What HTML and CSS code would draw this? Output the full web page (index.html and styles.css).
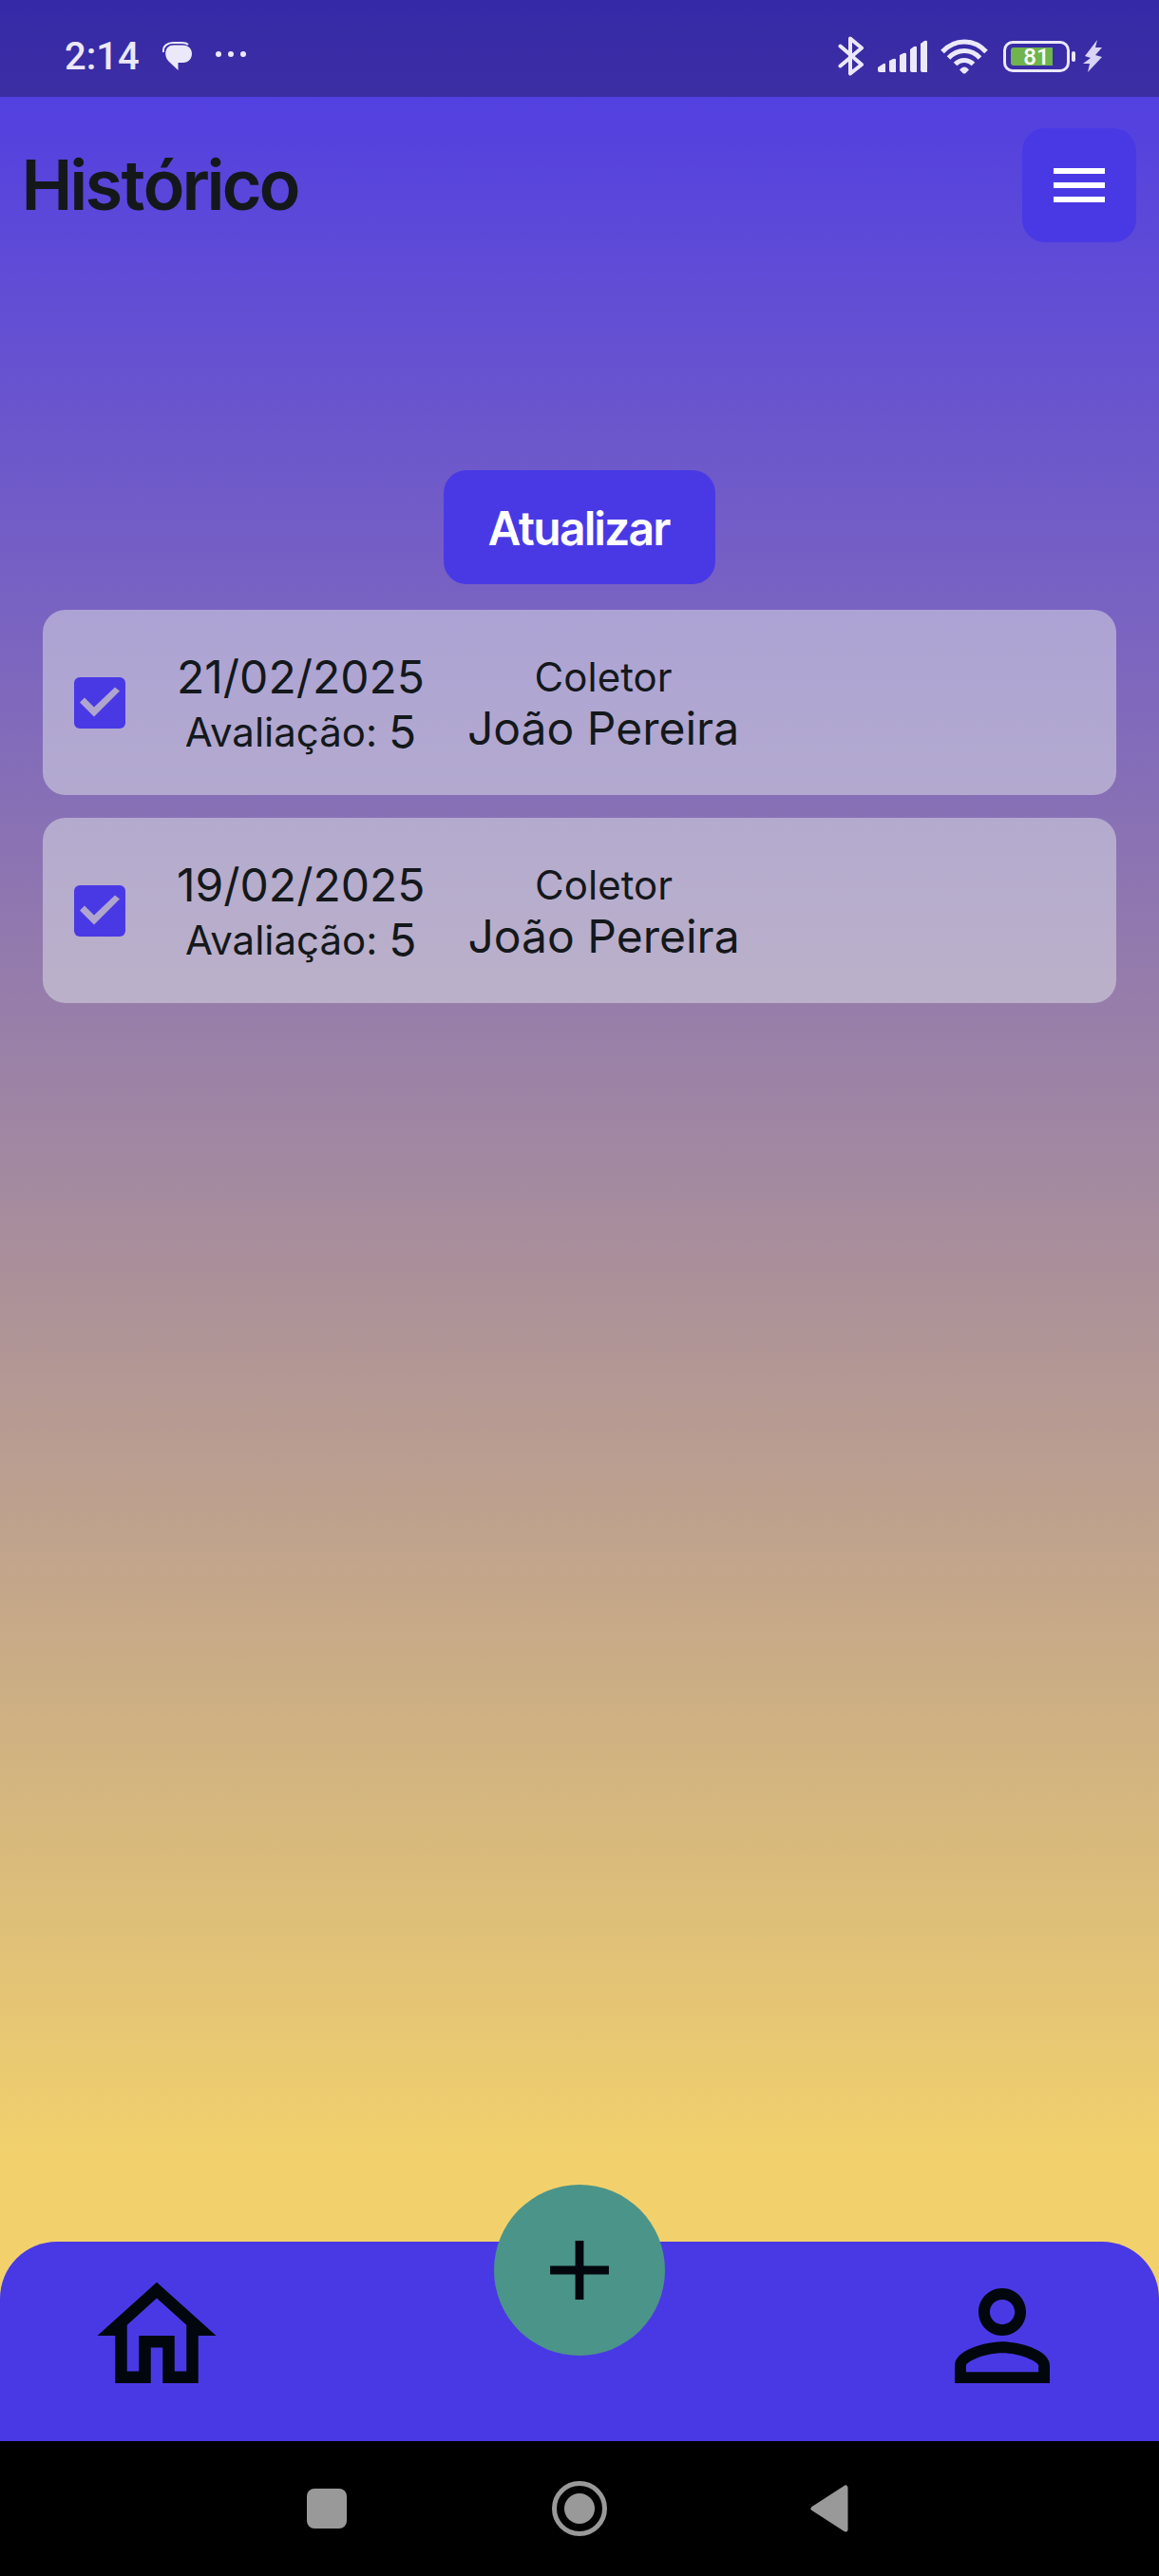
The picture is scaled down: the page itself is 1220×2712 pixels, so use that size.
FILE: index.html
```html
<!DOCTYPE html>
<html lang="pt-BR">
<head>
<meta charset="utf-8">
<meta name="viewport" content="width=device-width, initial-scale=1">
<title>Histórico</title>
<link rel="stylesheet" href="styles.css">
</head>
<body>
<div class="screen">
  <div class="status-bar">
    <div class="status-left">
      <span class="clock">2:14</span>
      <svg class="icon-chat" viewBox="0 0 32 30" width="32" height="30" aria-hidden="true">
        <path d="M1 11C0 4 6 1 11 1H21Q25 1 27 3" fill="none" stroke="#ebe8fa" stroke-width="2"/>
        <path d="M12 3.500H21C28 3.500 31 8 31 12.500C31 18 27 22 22 22H16.500V30L7 21C1 15 2 3.500 12 3.500Z" fill="#ebe8fa"/>
      </svg>
      <svg class="icon-dots" viewBox="0 0 32 6" width="32" height="6" aria-hidden="true">
        <g fill="#ebe8fa"><circle cx="3" cy="3" r="3"/><circle cx="16" cy="3" r="3"/><circle cx="29" cy="3" r="3"/></g>
      </svg>
    </div>
    <div class="status-right">
      <svg viewBox="0 0 28 42" width="28" height="42" aria-hidden="true">
        <path d="M2.500 10.500L25 30L13 39.500V2.500L25 12.500L2.500 31.500" fill="none" stroke="#ebe8fa" stroke-width="4" stroke-linejoin="round" stroke-linecap="round"/>
      </svg>
      <svg class="icon-signal" viewBox="0 0 52 34" width="52" height="34" aria-hidden="true">
        <g fill="#ebe8fa"><path d="M0 29l6-4q2-1 2 1v8H2q-2 0-2-2z"/><path d="M12 22l4-2q3-1 3 1v13h-5q-2 0-2-2z"/><path d="M23 16l4-2q3-1 3 1v19h-5q-2 0-2-2z"/><path d="M34 10l4-3q3-1 3 1v26h-5q-2 0-2-2z"/><path d="M45 4l4-3q3-1 3 1v32h-5q-2 0-2-2z"/></g>
      </svg>
      <svg class="icon-wifi" viewBox="0 0 50 37" width="50" height="37" aria-hidden="true">
        <g fill="none" stroke="#ebe8fa" stroke-width="5"><path d="M2 13.500C15-.500 35-.500 48 13.500"/><path d="M8.500 20C18 10 32 10 41.500 20"/><path d="M15.500 26.500C21 21 29 21 34.500 26.500"/></g>
        <path d="M20 32.500Q25 26.500 30 32.500L26.500 36Q25 37 23.500 36Z" fill="#ebe8fa"/>
      </svg>
      <div class="battery">
        <div class="battery-case"><span class="battery-fill"></span><span class="battery-level">81</span></div>
        <span class="battery-tip"></span>
      </div>
      <svg class="icon-bolt" viewBox="0 0 20 34" width="20" height="34" aria-hidden="true">
        <path d="M15 0L2 17l6 2L0 25h7L5 34L20 18l-7-2 7-8h-7z" fill="#d9d4f5"/>
      </svg>
    </div>
  </div>

  <header class="app-bar">
    <h1 class="title">Histórico</h1>
    <button class="menu-button" type="button" aria-label="Menu">
      <svg viewBox="0 0 24 24" width="72" height="72" aria-hidden="true"><path d="M3 18h18v-2H3v2zm0-5h18v-2H3v2zm0-7v2h18V6H3z" fill="#fff"/></svg>
    </button>
  </header>

  <main class="content">
    <button class="refresh" type="button">Atualizar</button>
    <ul class="records">
      <li class="record">
        <input class="check" type="checkbox" checked aria-label="Coleta de 21/02/2025">
        <div class="cell">
          <span class="strong">21/02/2025</span>
          <span class="rating"><span class="label">Avaliação: </span><span class="strong">5</span></span>
        </div>
        <div class="cell">
          <span class="label">Coletor</span>
          <span class="strong">João Pereira</span>
        </div>
      </li>
      <li class="record">
        <input class="check" type="checkbox" checked aria-label="Coleta de 19/02/2025">
        <div class="cell">
          <span class="strong">19/02/2025</span>
          <span class="rating"><span class="label">Avaliação: </span><span class="strong">5</span></span>
        </div>
        <div class="cell">
          <span class="label">Coletor</span>
          <span class="strong">João Pereira</span>
        </div>
      </li>
    </ul>
  </main>

  <nav class="tab-bar">
    <a class="tab" href="#inicio" aria-label="Início">
      <svg viewBox="0 0 24 24" width="150" height="150" aria-hidden="true"><path d="M12 5.690l5 4.500V18h-2v-6H9v6H7v-7.810l5-4.500M12 3L2 12h3v8h6v-6h2v6h6v-8h3L12 3z" fill="#02070d"/></svg>
    </a>
    <button class="add" type="button" aria-label="Adicionar">
      <svg viewBox="0 0 24 24" width="106" height="106" aria-hidden="true"><path d="M19 13h-6v6h-2v-6H5v-2h6V5h2v6h6v2z" fill="#02070d"/></svg>
    </button>
    <a class="tab" href="#perfil" aria-label="Perfil">
      <svg viewBox="0 0 24 24" width="150" height="150" aria-hidden="true"><path d="M12 5.900c1.160 0 2.100.940 2.100 2.100s-.940 2.100-2.100 2.100S9.900 9.160 9.900 8s.940-2.100 2.100-2.100m0 9c2.970 0 6.100 1.460 6.100 2.100v1.100H5.900V17c0-.640 3.130-2.100 6.100-2.100M12 4C9.790 4 8 5.790 8 8s1.790 4 4 4 4-1.790 4-4-1.790-4-4-4zm0 9c-2.670 0-8 1.340-8 4v3h16v-3c0-2.660-5.330-4-8-4z" fill="#02070d"/></svg>
    </a>
  </nav>

  <div class="system-bar">
    <button class="system-key" type="button" aria-label="Recentes"><svg viewBox="0 0 60 60" width="60" height="60" aria-hidden="true"><rect x="9" y="9" width="42" height="42" rx="8" fill="#999"/></svg></button>
    <button class="system-key" type="button" aria-label="Tela inicial"><svg viewBox="0 0 60 60" width="60" height="60" aria-hidden="true"><circle cx="30" cy="30" r="26.500" fill="none" stroke="#999" stroke-width="5"/><circle cx="30" cy="30" r="16" fill="#999"/></svg></button>
    <button class="system-key" type="button" aria-label="Voltar"><svg viewBox="0 0 60 60" width="60" height="60" aria-hidden="true"><path d="M10 30L44 8V52Z" fill="#999" stroke="#999" stroke-width="5" stroke-linejoin="round"/></svg></button>
  </div>
</div>
</body>
</html>
```
FILE: styles.css
```css
* { box-sizing: border-box; }

body {
  margin: 0;
  font-family: Inter, "Liberation Sans", sans-serif;
  color: #14181b;
}

button {
  border: 0;
  padding: 0;
  font: inherit;
}

svg { display: block; }

.screen {
  display: flex;
  flex-direction: column;
  min-height: 100vh;
  background: linear-gradient(180deg, #4b39e6 0, #ac9199 50%, #f2d16c 84%);
}

/* Status bar */
.status-bar {
  display: flex;
  justify-content: space-between;
  align-items: center;
  height: 102px;
  padding: 16px 60px 0 68px;
  background: rgba(0, 0, 0, 0.27);
  color: #ebe8fa;
}

.status-left,
.status-right {
  display: flex;
  align-items: center;
}

.clock {
  padding-top: 2px;
  font: 500 40px/48px Roboto, sans-serif;
}

.icon-chat { margin-left: 24px; }
.icon-dots { margin: 0 0 4px 24px; }
.icon-signal { margin-left: 14px; }
.icon-wifi { margin-left: 14px; }
.battery {
  display: flex;
  align-items: center;
  gap: 2px;
  margin-left: 16px;
}

.battery-case {
  position: relative;
  display: flex;
  align-items: center;
  justify-content: center;
  width: 70px;
  height: 33px;
  border: 3px solid #ebe8fa;
  border-radius: 10px;
}

.battery-fill {
  position: absolute;
  left: 5px;
  top: 4px;
  bottom: 4px;
  width: 44px;
  border-radius: 3px 0 0 3px;
  background: #6fb44c;
}

.battery-level {
  position: relative;
  padding-top: 2px;
  font: 500 24px/28px Roboto, sans-serif;
  color: #fff;
}

.battery-tip {
  width: 4px;
  height: 11px;
  border-radius: 2px;
  background: #ebe8fa;
}

.icon-bolt { margin-left: 8px; }

/* App bar */
.app-bar {
  display: flex;
  justify-content: space-between;
  align-items: center;
  padding: 33px 24px;
}

.title {
  margin: 0;
  font-family: "Inter Tight", "Inter Display", Inter, sans-serif;
  font-size: 72px;
  line-height: 88px;
  font-weight: 600;
}

.menu-button {
  display: grid;
  place-items: center;
  width: 120px;
  height: 120px;
  border-radius: 24px;
  background: #4939e5;
}

/* Records */
.content {
  display: flex;
  flex: 1;
  flex-direction: column;
  align-items: center;
  gap: 27px;
  padding: 207px 45px 48px;
}

.refresh {
  height: 120px;
  padding: 3px 48px 0;
  border-radius: 24px;
  background: #4939e5;
  color: #fff;
  font-family: "Inter Tight", "Inter Display", Inter, sans-serif;
  font-size: 48px;
  font-weight: 600;
}

.records {
  display: flex;
  flex-direction: column;
  gap: 24px;
  align-self: stretch;
  margin: 0;
  padding: 0;
  list-style: none;
}

.record {
  display: flex;
  align-items: center;
  gap: 45px;
  height: 195px;
  padding: 0 33px;
  border-radius: 24px;
  background: rgba(224, 227, 231, 0.5);
}

.check {
  appearance: none;
  width: 54px;
  height: 54px;
  margin: 0 9px 0 0;
  border-radius: 6px;
  background: #4939e5;
}

.check::before {
  content: "";
  display: block;
  width: 54px;
  height: 54px;
  background: #b0a6cd;
  clip-path: polygon(6px 27px, 11px 22px, 21px 32px, 43px 11px, 48px 15px, 21px 42px);
}

.cell {
  display: flex;
  flex-direction: column;
  align-items: center;
  padding-top: 4px;
}

.rating {
  display: flex;
  align-items: center;
  white-space: pre;
}

.strong {
  font-size: 48px;
  line-height: 58px;
}

.label {
  font-size: 42px;
  line-height: 51px;
}

/* Bottom navigation */
.tab-bar {
  display: grid;
  grid-template-columns: 1fr auto 1fr;
  height: 210px;
  padding: 24px 90px 0;
  border-radius: 60px 60px 0 0;
  background: #4939e5;
}

.tab:last-child { justify-self: end; }

.add {
  display: grid;
  place-items: center;
  width: 180px;
  height: 180px;
  margin-top: -84px;
  border-radius: 50%;
  background: #4b9489;
}

/* System navigation */
.system-bar {
  display: flex;
  justify-content: center;
  align-items: center;
  gap: 206px;
  height: 142px;
  background: #000;
}

.system-key { background: none; }
```
